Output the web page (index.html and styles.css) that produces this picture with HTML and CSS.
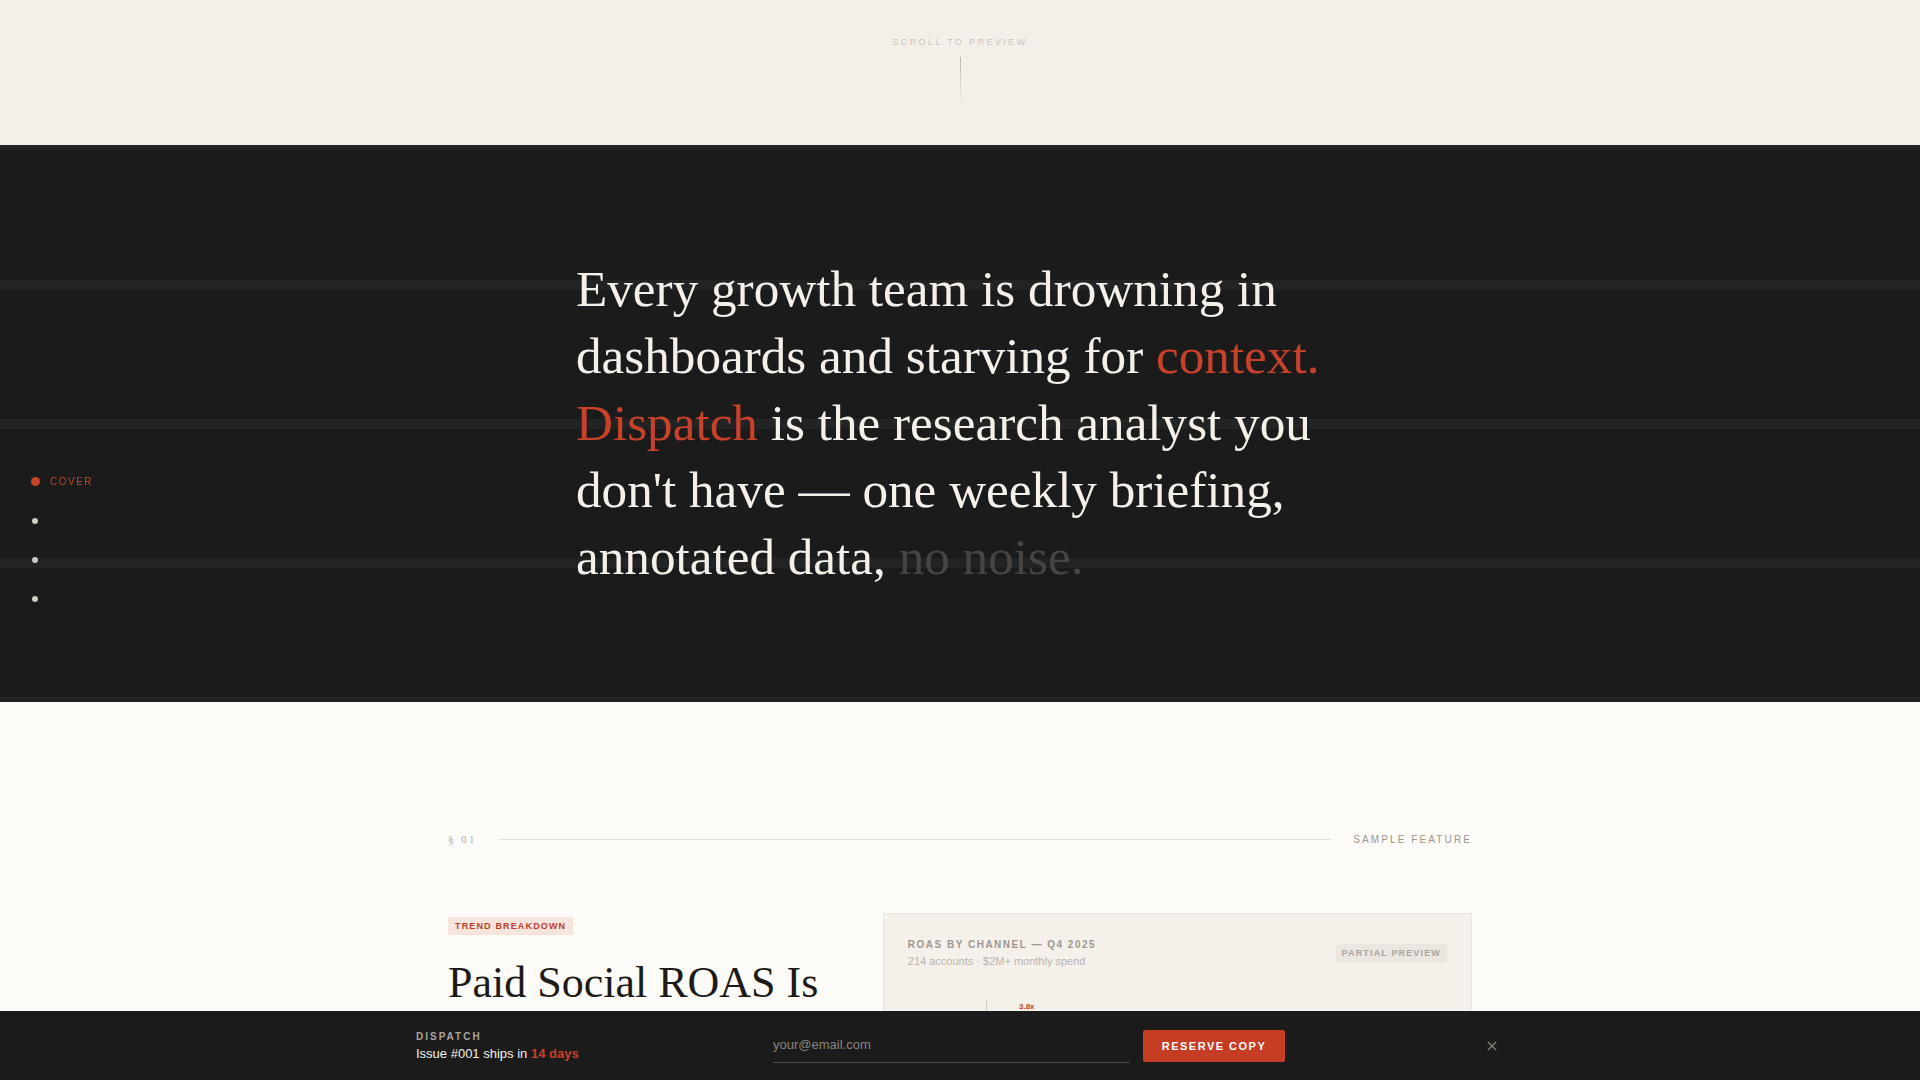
FILE: index.html
```html
<!DOCTYPE html>
<html lang="en">
<head>
    <meta charset="UTF-8">
    <meta name="viewport" content="width=device-width, initial-scale=1.0">
    <title>Dispatch — Weekly Growth Briefing</title>
    <link rel="stylesheet" href="styles.css">
</head>
<body>
    <div class="scroll-hint">
        <span>Scroll to preview</span>
        <div class="scroll-line"></div>
    </div>

    <nav class="side-nav">
        <a class="nav-item active" href="#cover"><span class="dot"></span><span class="nav-label">Cover</span></a>
        <a class="nav-item" href="#feature"><span class="dot"></span></a>
        <a class="nav-item" href="#data"><span class="dot"></span></a>
        <a class="nav-item" href="#reserve"><span class="dot"></span></a>
    </nav>

    <section class="manifesto" id="cover">
        <p class="manifesto-text">
            Every growth team is drowning in dashboards and starving for <em>context.</em>
            <em>Dispatch</em> is the research analyst you don't have — one weekly briefing,
            annotated data, <span class="muted">no noise.</span>
        </p>
    </section>

    <section class="feature" id="feature">
        <div class="container">
            <div class="section-rule">
                <span class="section-num">§ 01</span>
                <span class="rule"></span>
                <span class="section-name">Sample feature</span>
            </div>

            <div class="feature-grid">
                <div class="feature-copy">
                    <span class="tag">Trend breakdown</span>
                    <h2>Paid Social ROAS Is Quietly Compressing</h2>
                </div>

                <div class="chart-card" id="data">
                    <div class="chart-head">
                        <div>
                            <div class="chart-title">ROAS by channel — Q4 2025</div>
                            <div class="chart-sub">214 accounts · $2M+ monthly spend</div>
                        </div>
                        <span class="badge">Partial preview</span>
                    </div>
                    <div class="chart">
                        <div class="chart-axis"></div>
                        <div class="bars">
                            <div class="bar-col"><span class="bar-val">3.8x</span><div class="bar" style="height: 203px"></div></div>
                            <div class="bar-col"><span class="bar-val">3.1x</span><div class="bar" style="height: 166px"></div></div>
                            <div class="bar-col"><span class="bar-val">2.6x</span><div class="bar" style="height: 139px"></div></div>
                            <div class="bar-col"><span class="bar-val">1.9x</span><div class="bar" style="height: 101px"></div></div>
                            <div class="bar-col"><span class="bar-val">1.4x</span><div class="bar" style="height: 75px"></div></div>
                        </div>
                    </div>
                </div>
            </div>
        </div>
    </section>

    <div class="signup-bar" id="reserve">
        <div class="signup-inner">
            <div class="brand">
                <div class="brand-name">Dispatch</div>
                <div class="brand-note">Issue #001 ships in <strong>14 days</strong></div>
            </div>
            <form class="signup-form">
                <input type="email" placeholder="your@email.com">
                <button type="button">Reserve copy</button>
            </form>
            <button class="close" type="button" aria-label="Close">
                <svg width="10" height="10" viewBox="0 0 10 10"><path d="M1 1 L9 9 M9 1 L1 9" stroke="#8d8881" stroke-width="1.1" fill="none"/></svg>
            </button>
        </div>
    </div>
</body>
</html>
```

FILE: styles.css
```css
body {
    margin: 0;
    background: #fcfbf7;
    font-family: "Liberation Sans", Arial, sans-serif;
    color: #1b1b1b;
}

/* top hint */
.scroll-hint {
    height: 145px;
    background: #f5efe9;
    display: flex;
    flex-direction: column;
    align-items: center;
    padding-top: 37px;
    box-sizing: border-box;
}
.scroll-hint span {
    font-size: 9px;
    letter-spacing: 2.4px;
    text-transform: uppercase;
    color: #cbc4bc;
}
.scroll-line {
    width: 1px;
    height: 46px;
    margin-top: 10px;
    background: linear-gradient(to bottom, #b9b2aa, rgba(185,178,170,0));
}

/* side nav */
.side-nav {
    position: fixed;
    left: 30px;
    top: 50%;
    transform: translateY(-50%);
    display: flex;
    flex-direction: column;
    gap: 26px;
    z-index: 5;
}
.nav-item {
    display: flex;
    align-items: center;
    height: 13px;
    text-decoration: none;
}
.nav-item .dot {
    width: 6px;
    height: 6px;
    border-radius: 50%;
    background: #cfcac4;
    margin: 0 2px;
}
.nav-item.active .dot {
    width: 9px;
    height: 9px;
    margin: 0 0.5px;
    background: #c8412a;
}
.nav-label {
    margin-left: 10px;
    font-size: 10px;
    letter-spacing: 1.5px;
    text-transform: uppercase;
    color: #c0452c;
}

/* manifesto */
.manifesto {
    height: 557px;
    background-color: #1b1b1b;
    background-image: repeating-linear-gradient(to bottom, #1b1b1b 0, #1b1b1b 129px, #232323 129px, #232323 139px);
    background-position: 0 6px;
    display: flex;
    align-items: center;
}
.manifesto-text {
    max-width: 768px;
    margin: 0 auto;
    font-family: "Liberation Serif", "Times New Roman", serif;
    font-size: 51.2px;
    line-height: 1.305;
    color: #f5f0e9;
}
.manifesto-text em {
    font-style: normal;
    color: #c8412a;
}
.manifesto-text .muted {
    color: #474441;
}

/* feature */
.feature {
    padding: 131px 0 200px;
}
.container {
    max-width: 1024px;
    margin: 0 auto;
}
.section-rule {
    display: flex;
    align-items: center;
    gap: 22px;
}
.section-num {
    font-family: "Liberation Serif", serif;
    font-size: 11px;
    letter-spacing: 2.4px;
    color: #b2aca4;
}
.rule {
    flex: 1;
    height: 1px;
    background: #e4dfd7;
}
.section-name {
    font-size: 10px;
    letter-spacing: 2.1px;
    text-transform: uppercase;
    color: #9b958d;
}
.feature-grid {
    display: grid;
    grid-template-columns: 2fr 3fr;
    gap: 42px;
    margin-top: 68px;
}
.feature-copy {
    padding-top: 2px;
}
.tag {
    display: inline-block;
    padding: 4px 7px;
    background: #f6e4dd;
    color: #bd3f28;
    font-size: 9px;
    font-weight: bold;
    letter-spacing: 1.15px;
    text-transform: uppercase;
}
.feature-copy h2 {
    margin: 22px 0 0;
    font-family: "Liberation Serif", "Times New Roman", serif;
    font-weight: normal;
    font-size: 44px;
    line-height: 1.2;
    color: #1c1b19;
}

/* chart card */
.chart-card {
    background: #f5f0ea;
    border: 1px solid #ebe5dd;
    padding: 25px 24px 24px 24px;
}
.chart-head {
    display: flex;
    justify-content: space-between;
    align-items: center;
}
.chart-title {
    font-size: 10px;
    font-weight: bold;
    letter-spacing: 1.5px;
    text-transform: uppercase;
    color: #9d978f;
}
.chart-sub {
    margin-top: 5px;
    font-size: 11px;
    color: #bab4ac;
}
.badge {
    padding: 4px 6px;
    background: #ebe6e0;
    border-radius: 2px;
    font-size: 9px;
    font-weight: bold;
    letter-spacing: 1.15px;
    text-transform: uppercase;
    color: #aaa49c;
}
.chart {
    display: flex;
    height: 220px;
    margin-top: 33px;
}
.chart-axis {
    width: 78px;
    border-right: 1px solid #cfc9c1;
}
.bars {
    flex: 1;
    display: flex;
    align-items: flex-end;
    gap: 40px;
    padding-left: 21px;
    border-bottom: 1px solid #cfc9c1;
}
.bar-col {
    width: 38px;
    display: flex;
    flex-direction: column;
    align-items: center;
}
.bar-val {
    font-size: 8px;
    line-height: 10px;
    font-weight: bold;
    color: #c0452c;
    margin-bottom: 4px;
}
.bar {
    width: 100%;
    background: #c8412a;
}

/* sticky signup */
.signup-bar {
    position: fixed;
    left: 0;
    right: 0;
    bottom: 0;
    height: 69px;
    background: #1b1b1b;
    z-index: 10;
}
.signup-inner {
    max-width: 1088px;
    height: 100%;
    margin: 0 auto;
    display: grid;
    grid-template-columns: 357px 512px 1fr;
    align-items: center;
}
.brand-name {
    font-size: 10px;
    font-weight: bold;
    letter-spacing: 2px;
    text-transform: uppercase;
    color: #aaa49c;
}
.brand-note {
    margin-top: 4px;
    font-size: 13px;
    color: #f5f0e9;
}
.brand-note strong {
    color: #c8412a;
}
.signup-form {
    display: flex;
    align-items: center;
    gap: 13px;
}
.signup-form input {
    width: 357px;
    box-sizing: border-box;
    padding: 8px 0 10px;
    background: transparent;
    border: none;
    border-bottom: 1px solid #4c4a47;
    font-family: inherit;
    font-size: 13px;
    color: #f5f0e9;
    outline: none;
}
.signup-form input::placeholder {
    color: #8a857e;
}
.signup-form button {
    width: 142px;
    height: 32px;
    border: none;
    border-radius: 2px;
    background: #c43d24;
    color: #fff;
    font-family: inherit;
    font-size: 11px;
    font-weight: bold;
    letter-spacing: 1.5px;
    text-transform: uppercase;
}
.close {
    justify-self: end;
    width: 24px;
    height: 24px;
    padding: 0;
    border: none;
    background: transparent;
    display: flex;
    align-items: center;
    justify-content: center;
}
```
